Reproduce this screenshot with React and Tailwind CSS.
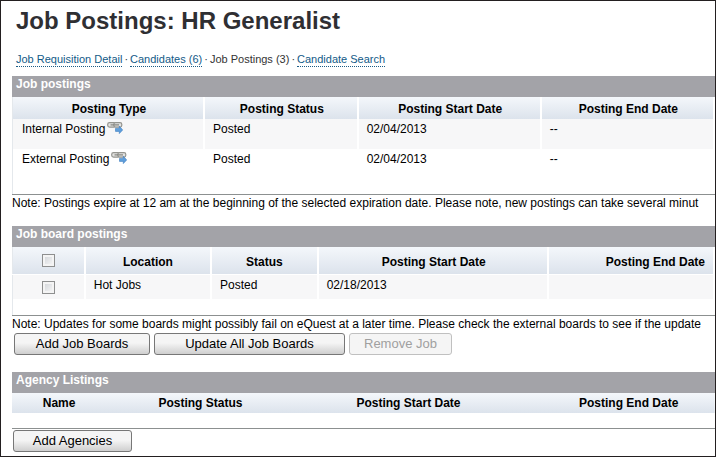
import React, { useState } from 'react';
import clsx from 'clsx';

const POSTINGS = [
  { type: 'Internal Posting', status: 'Posted', start: '02/04/2013', end: '--' },
  { type: 'External Posting', status: 'Posted', start: '02/04/2013', end: '--' },
];

const BOARDS = [{ location: 'Hot Jobs', status: 'Posted', start: '02/18/2013', end: '' }];

const HEAD_BG = 'bg-linear-to-b from-[#f4f7fb] to-[#dce3ec]';

function LinkIcon() {
  return (
    <svg width="16" height="13" viewBox="0 0 16 13" className="ml-0.5 inline-block align-top" aria-hidden="true">
      <rect x="0.7" y="1.7" width="8" height="4.4" rx="1.8" fill="#e2e2e0" stroke="#94948f" strokeWidth="1.2" />
      <rect x="6.8" y="1.7" width="8" height="4.4" rx="1.8" fill="#e2e2e0" stroke="#94948f" strokeWidth="1.2" />
      <path d="M3.5 3.9h8.5" stroke="#85857f" strokeWidth="1.2" />
      <path d="M8.5 7.4h3.8V5.2l3.4 3.7-3.4 3.7v-2.2H8.5z" fill="#5f9fdc" stroke="#3c7cc0" strokeWidth="0.6" />
    </svg>
  );
}

function NavLink({ children }) {
  return (
    <a href="#" className="border-b border-dotted border-[#1b5c85] leading-[14px] text-[#125a87]">
      {children}
    </a>
  );
}

function SectionBar({ children }) {
  return <h2 className="h-[21px] bg-[#a3a3a8] pl-1 text-xs leading-4 font-bold text-white">{children}</h2>;
}

function Note({ children }) {
  return <p className="overflow-hidden border-t border-[#8c9090] text-xs leading-[17px] whitespace-nowrap">{children}</p>;
}

function Button({ children, className, ...props }) {
  return (
    <button
      type="button"
      className={clsx(
        'h-[22px] rounded-[3px] border border-[#777] bg-linear-to-b from-[#f5f5f5] from-45% to-[#cfcfcf] text-center text-[13px] leading-5',
        'disabled:border-[#c0c0c0] disabled:from-[#f5f5f5] disabled:to-[#f5f5f5] disabled:text-[#a0a0a0]',
        className
      )}
      {...props}
    >
      {children}
    </button>
  );
}

function Checkbox(props) {
  return (
    <input
      type="checkbox"
      className="mx-auto block size-[13px] appearance-none border border-[#8e8f8f] bg-linear-to-br from-[#cfd2d6] to-[#fafafa] shadow-[inset_0_0_0_2px_#f4f4f4] checked:bg-[#4b6a8a]"
      {...props}
    />
  );
}

function App() {
  const [selected, setSelected] = useState([]);
  const allSelected = selected.length === BOARDS.length;

  const toggleBoard = (i) => {
    setSelected(prev => (prev.includes(i) ? prev.filter(x => x !== i) : [...prev, i]));
  };

  return (
    <div className="overflow-hidden border border-[#231f20] bg-white pb-1 pl-[11px] font-['Liberation_Sans',Arial,sans-serif] text-xs text-black">
      {/* Title and tabs */}
      <h1 className="pt-1 pl-1 text-2xl leading-8 font-bold text-[#2f2f33]">Job Postings: HR Generalist</h1>
      <nav className="mt-[15px] mb-[9px] flex gap-0.5 pl-1 text-[11px] leading-[14px] text-[#333]">
        <NavLink>Job Requisition Detail</NavLink>
        <span>·</span>
        <NavLink>Candidates (6)</NavLink>
        <span>·</span>
        <span>Job Postings (3)</span>
        <span>·</span>
        <NavLink>Candidate Search</NavLink>
      </nav>

      {/* Job postings */}
      <section>
        <SectionBar>Job postings</SectionBar>
        <table className="w-full table-fixed border-l border-[#e4e8ec]">
          <colgroup>
            <col className="w-[27.3%]" />
            <col className="w-[21.9%]" />
            <col className="w-[26.1%]" />
            <col />
          </colgroup>
          <thead>
            <tr className={HEAD_BG}>
              {['Posting Type', 'Posting Status', 'Posting Start Date', 'Posting End Date'].map(h => (
                <th key={h} scope="col" className="h-[22px] border-r-2 border-white pt-px pl-0.5 font-bold">{h}</th>
              ))}
            </tr>
          </thead>
          <tbody>
            {POSTINGS.map(p => (
              <tr key={p.type} className="h-[30px] align-top odd:bg-[#f7f7f8]">
                <td className="border-r-2 border-white pt-0.5 pl-[9px]">{p.type}<LinkIcon /></td>
                <td className="border-r-2 border-white pt-0.5 pl-2">{p.status}</td>
                <td className="border-r-2 border-white pt-0.5 pl-2">{p.start}</td>
                <td className="border-r-2 border-white pt-0.5 pl-2">{p.end}</td>
              </tr>
            ))}
          </tbody>
        </table>
        <div className="h-[15px] border-l border-[#e4e8ec]" />
        <Note>
          Note: Postings expire at 12 am at the beginning of the selected expiration date. Please note, new postings can take several minut
        </Note>
      </section>

      {/* Job board postings */}
      <section className="mt-[14px]">
        <SectionBar>Job board postings</SectionBar>
        <table className="w-full table-fixed border-l border-[#e4e8ec]">
          <colgroup>
            <col className="w-[10.3%]" />
            <col className="w-[18%]" />
            <col className="w-[15.2%]" />
            <col className="w-[32.8%]" />
            <col />
          </colgroup>
          <thead>
            <tr className={HEAD_BG}>
              <th scope="col" className="h-[27px] border-r-2 border-white">
                <Checkbox
                  aria-label="Select all job boards"
                  checked={allSelected}
                  onChange={() => setSelected(allSelected ? [] : BOARDS.map((_, i) => i))}
                />
              </th>
              <th scope="col" className="border-r-2 border-white pt-1 font-bold">Location</th>
              <th scope="col" className="border-r-2 border-white pt-1 font-bold">Status</th>
              <th scope="col" className="border-r-2 border-white pt-1 pl-0.5 font-bold">Posting Start Date</th>
              <th scope="col" className="border-r-2 border-white pt-1 pr-2 text-right font-bold">Posting End Date</th>
            </tr>
          </thead>
          <tbody>
            {BOARDS.map((b, i) => (
              <tr key={b.location} className="h-[25px] border-t border-white bg-[#f7f7f8] align-top">
                <td className="border-r-2 border-white pt-[6px]">
                  <Checkbox aria-label={b.location} checked={selected.includes(i)} onChange={() => toggleBoard(i)} />
                </td>
                <td className="border-r-2 border-white pt-0.5 pl-2">{b.location}</td>
                <td className="border-r-2 border-white pt-0.5 pl-2">{b.status}</td>
                <td className="border-r-2 border-white pt-0.5 pl-2">{b.start}</td>
                <td className="border-r-2 border-white pt-0.5 pl-2">{b.end}</td>
              </tr>
            ))}
          </tbody>
        </table>
        <div className="h-4 border-l border-[#e4e8ec]" />
        <Note>
          Note: Updates for some boards might possibly fail on eQuest at a later time. Please check the external boards to see if the update
        </Note>
        <div className="flex gap-1 pl-0.5">
          <Button className="w-[136px]">Add Job Boards</Button>
          <Button className="w-[191px]">Update All Job Boards</Button>
          <Button className="w-[103px]" disabled>Remove Job</Button>
        </div>
      </section>

      {/* Agency listings */}
      <section className="mt-[17px]">
        <SectionBar>Agency Listings</SectionBar>
        <table className="w-full table-fixed">
          <colgroup>
            <col className="w-[13.4%]" />
            <col className="w-[26.8%]" />
            <col className="w-[32.4%]" />
            <col />
          </colgroup>
          <thead>
            <tr className={HEAD_BG}>
              <th scope="col" className="h-5 font-bold">Name</th>
              <th scope="col" className="font-bold">Posting Status</th>
              <th scope="col" className="font-bold">Posting Start Date</th>
              <th scope="col" className="pl-5 font-bold">Posting End Date</th>
            </tr>
          </thead>
        </table>
        <div className="mt-[15px] border-t border-[#8c9090] pt-px pl-px">
          <Button className="w-[119px]">Add Agencies</Button>
        </div>
      </section>
    </div>
  );
}

export default App;
